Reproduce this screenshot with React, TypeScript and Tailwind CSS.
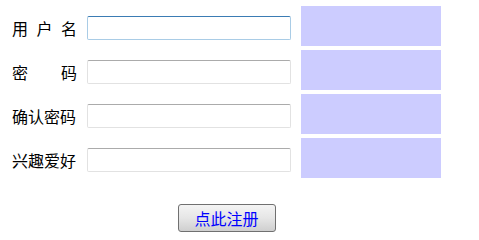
import React from "react";

const rows: { label: string[]; focused?: boolean; type: string }[] = [
  { label: ["用", "户", "名"], focused: true, type: "text" },
  { label: ["密", "码"], type: "password" },
  { label: ["确认密码"], type: "password" },
  { label: ["兴趣爱好"], type: "text" },
];

export default function App() {
  return (
    <div
      className="w-[479px] h-[238px] bg-white pl-[12px] pt-[6px]"
      style={{ fontFamily: '"Noto Sans CJK SC", "Liberation Sans", sans-serif' }}
    >
      <div className="w-[429px] flex flex-col">
        <div className="flex flex-col gap-[4px]">
          {rows.map((r, i) => (
            <div key={i} className="flex h-[40px]">
              <div className="w-[65px] flex justify-between items-center pt-[3px] text-[16px] leading-none text-black">
                {r.label.map((c, j) => (
                  <span key={j}>{c}</span>
                ))}
              </div>
              <div className="ml-[10px] pt-[10px]">
                <input
                  type={r.type}
                  className={
                    r.focused
                      ? "block w-[204px] h-[24px] rounded-[2px] border border-[#a9cce6] border-t-[#3b7cb4] bg-white outline-none"
                      : "block w-[204px] h-[24px] rounded-[2px] border border-[#e2e2e2] border-t-[#ababab] bg-white outline-none"
                  }
                />
              </div>
              <div className="ml-[10px] w-[140px] h-[40px] bg-[#ccccff]" />
            </div>
          ))}
        </div>
        <div className="flex justify-center mt-[26px]">
          <button className="w-[98px] h-[28px] rounded-[3px] border border-[#707070] bg-gradient-to-b from-[#f4f4f4] via-[#e6e6e6] to-[#cfcfcf] text-[16px] leading-none text-[#0000ff]">
            点此注册
          </button>
        </div>
      </div>
    </div>
  );
}
